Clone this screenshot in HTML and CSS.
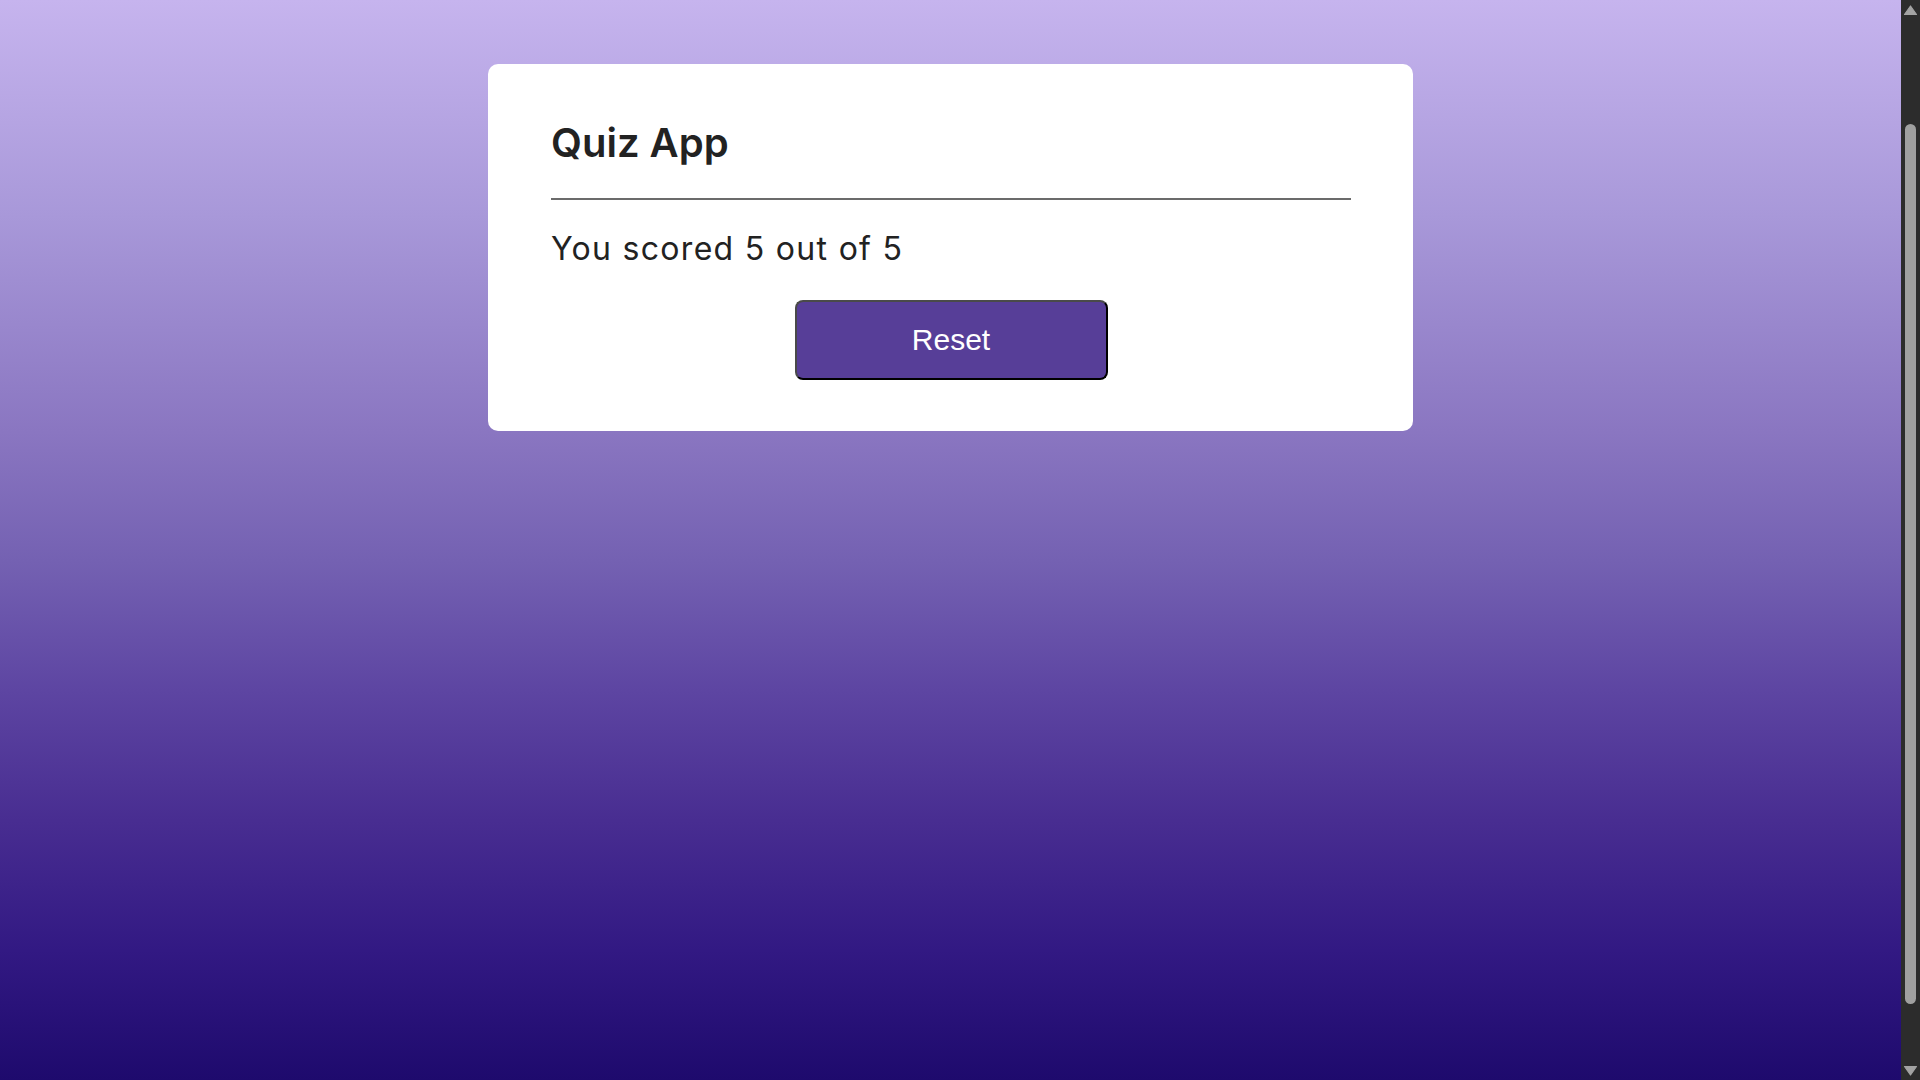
FILE: index.html
```html
<!DOCTYPE html>
<html lang="en">
<head>
<meta charset="utf-8">
<title>Quiz App</title>
<link rel="stylesheet" href="styles.css">
</head>
<body>
<div class="viewport">
  <main class="page">
    <div class="card">
      <h1 class="title">Quiz App</h1>
      <hr class="divider">
      <p class="score">You scored 5 out of 5</p>
      <div class="actions">
        <button class="reset-btn" type="button">Reset</button>
      </div>
    </div>
  </main>
  <div class="scrollbar" aria-hidden="true">
    <div class="sb-btn">
      <svg width="19" height="19" viewBox="0 0 19 19"><path d="M3.5 14.5 L9.5 6 L15.5 14.5 Z" fill="#a3a3a3" stroke="#a3a3a3" stroke-linejoin="round" stroke-width="1.2"/></svg>
    </div>
    <div class="sb-track">
      <div class="sb-thumb"></div>
    </div>
    <div class="sb-btn">
      <svg width="19" height="19" viewBox="0 0 19 19"><path d="M3.5 5.5 L15.5 5.5 L9.5 14 Z" fill="#a3a3a3" stroke="#a3a3a3" stroke-linejoin="round" stroke-width="1.2"/></svg>
    </div>
  </div>
</div>
</body>
</html>
```

FILE: styles.css
```css
html, body {
  margin: 0;
  padding: 0;
  height: 100%;
  overflow: hidden;
}

.viewport {
  display: flex;
  height: 100vh;
}

.page {
  flex: 1;
  box-sizing: border-box;
  padding-top: 64px;
  font-family: Inter, "Noto Sans", sans-serif;
  background: linear-gradient(to bottom,
    #c6b4ee 0%,
    #a898d9 20%,
    #8a76c1 40%,
    #7461b2 52%,
    #5d45a2 64%,
    #482d91 76%,
    #321983 88%,
    #1e0a6d 100%);
}

.scrollbar {
  width: 19px;
  flex: none;
  display: flex;
  flex-direction: column;
  background: #2c2c2c;
}

.sb-btn {
  height: 19px;
  flex: none;
}

.sb-btn svg {
  display: block;
}

.sb-track {
  flex: 1;
  padding-top: 105px;
}

.sb-thumb {
  height: 880px;
  margin: 0 4px;
  background: #a0a0a0;
  border-radius: 6px;
}

.card {
  width: 925px;
  box-sizing: border-box;
  margin: 0 auto;
  background: #ffffff;
  border-radius: 10px;
  padding: 55px 62px 51px 63px;
}

.title {
  margin: 0;
  font-size: 40px;
  line-height: 48px;
  font-weight: 600;
  color: #222222;
  letter-spacing: 0;
}

.divider {
  margin: 31px 0 0;
  border: 0;
  height: 2px;
  background: #6b6b6b;
}

.score {
  margin: 29px 0 0;
  font-size: 32px;
  line-height: 40px;
  font-weight: 400;
  color: #222222;
  letter-spacing: 1.3px;
}

.actions {
  display: flex;
  justify-content: center;
  margin-top: 31px;
}

.reset-btn {
  width: 313px;
  height: 80px;
  box-sizing: border-box;
  background: #573e98;
  color: #ffffff;
  border: 2px solid;
  border-color: #4a4a4a #000000 #000000 #4a4a4a;
  border-radius: 8px;
  font-family: "Liberation Sans", Arial, sans-serif;
  font-size: 30px;
  padding: 0;
}
```
